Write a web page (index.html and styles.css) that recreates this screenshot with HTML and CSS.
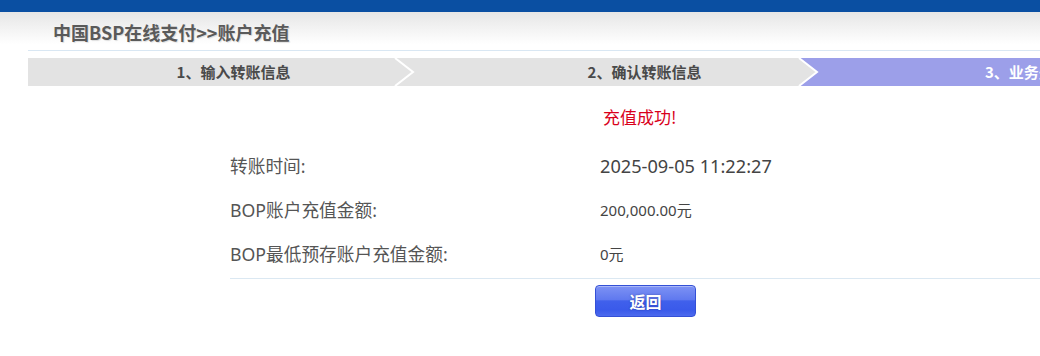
FILE: index.html
```html
<!DOCTYPE html>
<html lang="zh-CN">
<head>
  <meta charset="UTF-8">
  <title>中国BSP在线支付 - 账户充值</title>
  <link rel="stylesheet" href="styles.css">
</head>
<body>
  <div class="top-bar"></div>
  <div class="header">
    <h1 class="page-title">中国BSP在线支付&gt;&gt;账户充值</h1>
  </div>

  <!-- 步骤条 -->
  <div class="steps">
    <svg class="steps-bg" width="1012" height="28" viewBox="0 0 1012 28" preserveAspectRatio="none">
      <rect x="0" y="0" width="1012" height="28" fill="#e3e3e3"/>
      <polygon points="771,0 789,14 771,28 1012,28 1012,0" fill="#9c9fe9"/>
      <polyline points="367,0 385,14 367,28" fill="none" stroke="#fff" stroke-width="2"/>
      <polyline points="771,0 789,14 771,28" fill="none" stroke="#fff" stroke-width="2"/>
    </svg>
    <div class="step">1、输入转账信息</div>
    <div class="step">2、确认转账信息</div>
    <div class="step step-current">3、业务处理结果</div>
  </div>

  <div class="content">
    <div class="result-msg">充值成功!</div>
    <div class="info-list">
      <div class="info-row">
        <span class="info-label">转账时间:</span>
        <span class="info-value info-time">2025-09-05 11:22:27</span>
      </div>
      <div class="info-row">
        <span class="info-label">BOP账户充值金额:</span>
        <span class="info-value">200,000.00元</span>
      </div>
      <div class="info-row">
        <span class="info-label">BOP最低预存账户充值金额:</span>
        <span class="info-value">0元</span>
      </div>
    </div>
    <div class="actions">
      <button class="back-btn" type="button">返回</button>
    </div>
  </div>
</body>
</html>
```

FILE: styles.css
```css
/* 基本样式 */
body {
  margin: 0;
  padding: 0;
  background: #fff;
  font-family: "Noto Sans", "Noto Sans CJK SC", sans-serif;
  color: #555;
  overflow: hidden;
}
.top-bar {
  height: 12px;
  background: #0a4fa2;
}
/* 标题区：灰到白的渐变 */
.header {
  height: 38px;
  margin: 0;
  background: linear-gradient(#e6e6e6, #fff 85%);
  position: relative;
}
.header::after {
  content: "";
  display: block;
  margin-left: 28px;
  border-bottom: 1px solid #d9e7f3;
}
.page-title {
  margin: 0;
  padding-left: 53px;
  height: 38px;
  line-height: 40px;
  font-family: "Noto Sans CJK SC", sans-serif;
  font-size: 18px;
  font-weight: bold;
  color: #5a5a5a;
  text-shadow: 1px 1px 1px rgba(0,0,0,0.12);
}
/* 步骤条 */
.steps {
  position: relative;
  display: flex;
  margin: 8px 0 0 28px;
  height: 28px;
  overflow: hidden;
}
.steps-bg {
  position: absolute;
  top: 0;
  left: 0;
}
.step {
  position: relative;
  flex: 0 0 411px;
  text-align: center;
  line-height: 28px;
  font-family: "Noto Sans CJK SC", sans-serif;
  font-size: 15px;
  font-weight: bold;
  color: #4a4a4a;
  white-space: nowrap;
}
.step-current {
  color: #fff;
  text-align: left;
  padding-left: 135px;
}
/* 结果内容 */
.content {
  padding-left: 230px;
}
.result-msg {
  margin-top: 9px;
  padding-left: 373px;
  height: 44px;
  line-height: 44px;
  font-family: "Noto Sans CJK SC", sans-serif;
  font-size: 17px;
  color: #d9001b;
}
.info-list {
  margin-top: 5px;
  padding-bottom: 2px;
  border-bottom: 1px solid #dbe8f2;
}
.info-row {
  display: grid;
  grid-template-columns: 370px 1fr;
  height: 44px;
  line-height: 44px;
}
.info-label {
  font-size: 17.7px;
  color: #555;
}
.info-value {
  font-size: 15px;
  color: #444;
}
.info-time {
  font-size: 18.2px;
}
.actions {
  padding: 6px 0 0 365px;
}
/* 返回按钮 - 蓝色光泽效果 */
.back-btn {
  width: 101px;
  height: 32px;
  padding: 0;
  border: 1px solid #3450d6;
  border-radius: 4px;
  background: linear-gradient(#7d92f4 0%, #6079ef 45%, #4060ec 50%, #3a5aea 80%, #4c6aee 100%);
  box-shadow: inset 0 1px 0 rgba(255,255,255,0.35);
  color: #fff;
  font-family: "Noto Sans CJK SC", sans-serif;
  font-size: 16px;
  font-weight: bold;
  line-height: 30px;
  text-shadow: 0 0 2px rgba(0,0,60,0.4);
  cursor: pointer;
}
```
